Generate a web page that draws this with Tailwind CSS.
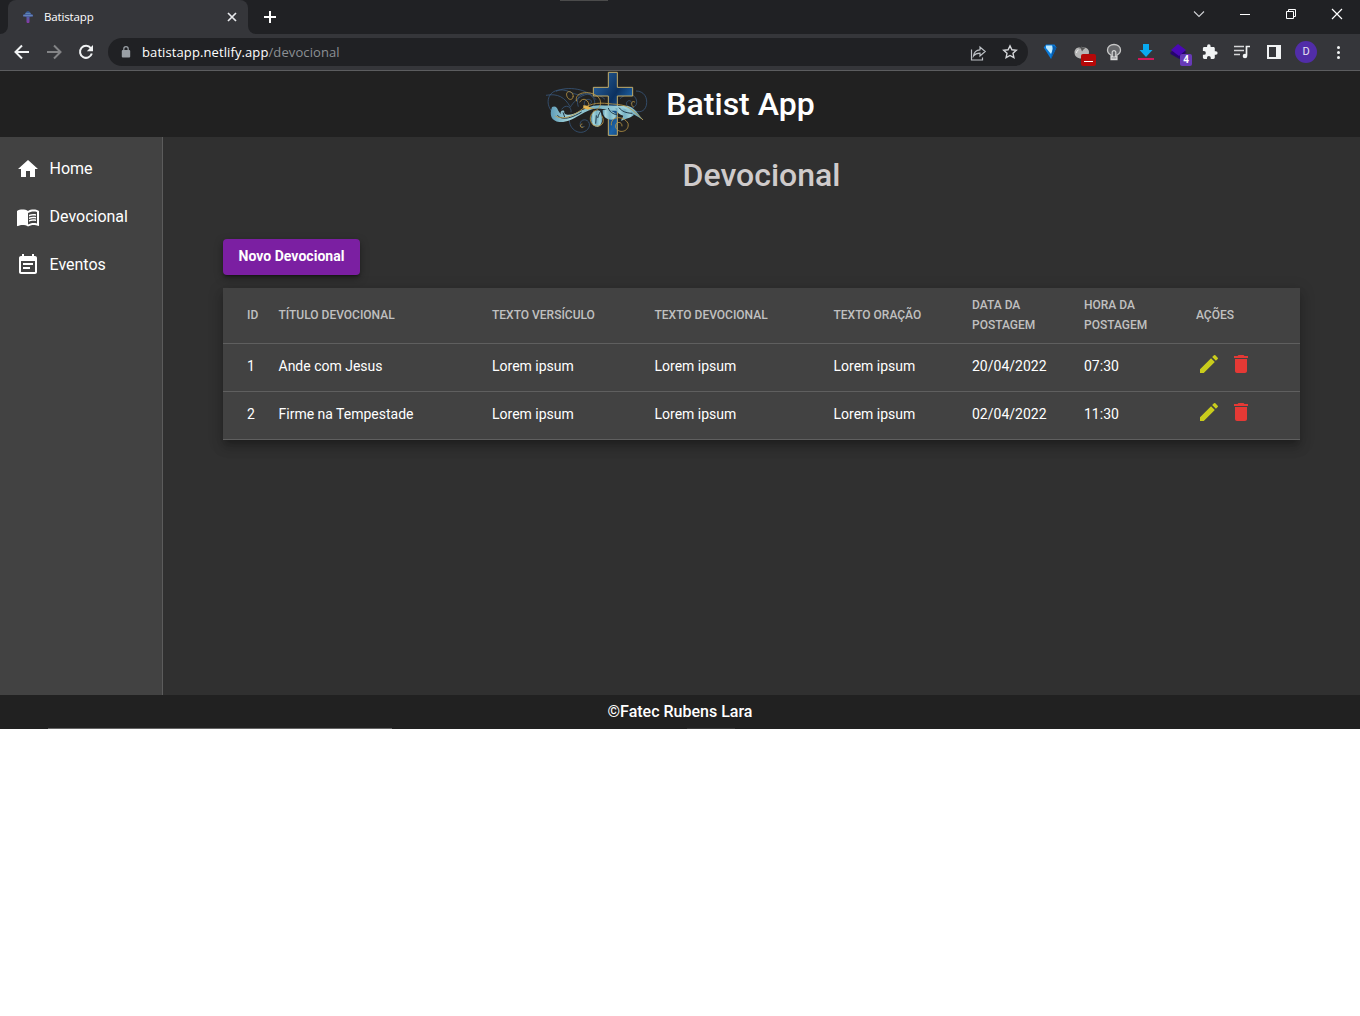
<!DOCTYPE html>
<html lang="pt-BR">
<head>
<meta charset="utf-8">
<title>Batistapp</title>
<script src="https://cdn.jsdelivr.net/npm/@tailwindcss/browser@4"></script>
</head>
<body class="bg-white font-['Roboto',sans-serif] text-white overflow-hidden">
<div class="flex flex-col h-[729px] w-[1360px] bg-[#303030]">

  <!-- Tab strip -->
  <div class="relative flex h-[34px] shrink-0 bg-[#202124] font-['Open_Sans',sans-serif]">
    <div class="absolute left-[560px] top-0 w-12 h-px bg-[#4b4b4b]"></div>
    <div class="w-2 flex items-end bg-[#35363a]"><div class="w-2 h-full bg-[#202124] rounded-br-lg"></div></div>
    <div class="w-60 flex items-center rounded-t-lg bg-[#35363a] pl-3 pr-[10px]">
      <svg class="w-4 h-4" viewBox="0 0 16 16"><defs><linearGradient id="fav" x1="0" y1="0" x2="0" y2="1"><stop offset="0" stop-color="#315a92"/><stop offset=".5" stop-color="#5260a5"/><stop offset="1" stop-color="#8a35a5"/></linearGradient></defs><path fill="url(#fav)" d="M6 3l2-1 2 1 1 2 2 .8v1.600l-3.500.6v5l-.5 1H7l-.5-1V8L3 7.400V5.800L5 5z"/><path d="M5.500 4.500h5M3.500 6.500h9" stroke="#739fc0" stroke-width=".6"/></svg>
      <span class="ml-2 text-[11.5px] leading-4 tracking-[-0.15px] grow">Batistapp</span>
      <svg class="w-3 h-3" viewBox="0 0 12 12"><path d="M2 2l8 8M10 2l-8 8" stroke="#e8eaed" stroke-width="1.7"/></svg>
    </div>
    <div class="w-2 bg-[#35363a]"><div class="w-2 h-full bg-[#202124] rounded-bl-lg"></div></div>
    <svg class="mt-[9px] ml-[6px] w-4 h-4" viewBox="0 0 16 16"><path d="M8 2v12M2 8h12" stroke="#fff" stroke-width="2"/></svg>
    <div class="ml-auto flex h-7 items-center">
      <svg class="w-[46px] h-7" viewBox="0 0 46 28"><path d="M18 11.500l5 5 5-5" fill="none" stroke="#d0d2d5" stroke-width="1.100"/></svg>
      <svg class="w-[46px] h-7" viewBox="0 0 46 28"><path d="M18 14.500h10" stroke="#fff"/></svg>
      <svg class="w-[46px] h-7" viewBox="0 0 46 28"><path d="M18.500 11.500h7v7h-7zM20.500 11.500v-2h7v7h-2" fill="none" stroke="#fff"/></svg>
      <svg class="w-[46px] h-7" viewBox="0 0 46 28"><path d="M18 9l10 10M28 9l-10 10" stroke="#fff" stroke-width="1.200"/></svg>
    </div>
  </div>

  <!-- Toolbar -->
  <div class="flex h-[37px] shrink-0 items-center border-b border-[#5c5d5f] bg-[#35363a] pl-[6px] pr-[6px]">
    <svg class="w-8 h-8" viewBox="0 0 32 32"><path d="M23 16H10M16 9.500L9.500 16l6.500 6.500" fill="none" stroke="#f1f3f4" stroke-width="2"/></svg>
    <svg class="w-8 h-8" viewBox="0 0 32 32"><path d="M9 16h13M16 9.500l6.500 6.500-6.500 6.500" fill="none" stroke="#838486" stroke-width="2"/></svg>
    <svg class="w-8 h-8" viewBox="0 0 32 32"><path d="M20.800 12.200A6 6 0 1 0 21.800 17.500" fill="none" stroke="#f1f3f4" stroke-width="2"/><path d="M23 9v6.200h-6.200z" fill="#f1f3f4"/></svg>
    <div class="ml-[6px] mr-[6px] flex h-7 w-[920px] items-center rounded-full bg-[#202124] pl-[13px] pr-[6px]">
      <svg class="w-[10px] h-3" viewBox="0 0 10 12"><rect x=".8" y="4" width="8.400" height="7.500" rx="1" fill="#9aa0a6"/><path d="M2.800 4.500V2.900a2.200 2.200 0 0 1 4.400 0v1.600" fill="none" stroke="#9aa0a6" stroke-width="1.200"/></svg>
      <span class="ml-[11px] grow whitespace-nowrap font-['Open_Sans',sans-serif] text-[13px] leading-5 tracking-[0.1px] text-white">batistapp.netlify.app<span class="text-[#8c9095]">/devocional</span></span>
      <svg class="w-6 h-6 mr-2" viewBox="0 0 24 24"><path d="M5.500 9.500v10.500h11v-2.500M7.500 16c.5-4 3.500-6 6.500-6.200V7l5.200 4.500-5.200 4.500v-2.800c-2.500 0-5 .8-6.500 2.800z" fill="none" stroke="#bdc1c6" stroke-width="1.200"/></svg>
      <svg class="w-6 h-6" viewBox="0 0 24 24"><path d="M12 5.800l1.900 4 4.400.5-3.300 3 .9 4.400-3.900-2.200-3.900 2.200.9-4.400-3.300-3 4.400-.5z" fill="none" stroke="#d5d7da" stroke-width="1.400"/></svg>
    </div>
    <svg class="w-8 h-8" viewBox="0 0 32 32"><path d="M9.700 11.500l2.300-3h8.500l2 3L17 23z" fill="#087bdc"/><path d="M12 9.500h6l1 3.500-2 5-5-6z" fill="#bce9ff"/><path d="M19 9.500l3.500 2L17 23l1.500-9z" fill="#075aa8"/></svg>
    <div class="relative w-8 h-8">
      <svg class="w-8 h-8" viewBox="0 0 32 32"><path d="M15 12c4-1.500 8 .5 8 4 0 4-3 6.500-7.500 6.500S8.500 20 8.500 16.500s3-6 6.500-4.500z" fill="#b6b6b6"/><path d="M11 11.500l4 1 .5-3 1 2.500 4-1-3 2.500-1.500 2-1-2.500z" fill="#555"/><path d="M10.500 17a3 3 0 0 1 2-3" fill="none" stroke="#eee"/></svg>
      <div class="absolute left-[15px] top-[18px] flex h-3 w-[15px] items-center justify-center rounded-[2px] bg-[#b50808]"><div class="mt-[3px] h-px w-[9px] bg-white"></div></div>
    </div>
    <svg class="w-8 h-8" viewBox="0 0 32 32"><path d="M13 19c-2-1-3.500-2.500-3.500-5a6.500 5.500 0 0 1 13 0c0 2.500-1.500 4-3.500 5V23.500h-6z" fill="#66676a" stroke="#c7c7c7" stroke-width="1.300"/><path d="M14.200 21v-5a1.900 1.900 0 0 1 3.600 0V21" fill="none" stroke="#d5d5d5" stroke-width="1.200"/><path d="M13 21h6M13 23h6" stroke="#eee"/></svg>
    <svg class="w-8 h-8" viewBox="0 0 32 32"><path d="M13 8h6v6h3.500L16 21l-6.500-7H13z" fill="#08a9ef"/><path d="M8 22h16v2H8z" fill="#d2185a"/></svg>
    <div class="relative w-8 h-8">
      <svg class="w-8 h-8" viewBox="0 0 32 32"><path d="M8.500 16l8-4 8 4-7 7-9-5z" fill="#26056d"/><path d="M9 14l7-6 8 6-7 6z" fill="#4a08b5"/></svg>
      <div class="absolute left-[18px] top-[18px] flex h-3 w-3 items-center justify-center rounded-[2px] bg-[#673ab7] text-[10px] font-bold leading-3">4</div>
    </div>
    <svg class="w-8 h-8" viewBox="0 0 32 32"><path transform="translate(7.500 7.500) scale(.7)" d="M20.500 11H19V7c0-1.100-.9-2-2-2h-4V3.500a2.500 2.500 0 0 0-5 0V5H4c-1.100 0-2 .9-2 2v3.800h1.500a2.700 2.700 0 0 1 0 5.400H2V20c0 1.100.9 2 2 2h3.800v-1.500a2.700 2.700 0 0 1 5.400 0V22H17c1.100 0 2-.9 2-2v-4h1.500a2.500 2.500 0 0 0 0-5z" fill="#f1f3f4"/></svg>
    <svg class="w-8 h-8" viewBox="0 0 32 32"><path d="M8 10.500h10M8 14.500h10M8 18.500h6" stroke="#d5d6d8" stroke-width="1.600"/><path d="M20.500 19.500V10.500H24" fill="none" stroke="#f1f3f4" stroke-width="1.700"/><circle cx="19" cy="20" r="2.300" fill="#f1f3f4"/></svg>
    <svg class="w-8 h-8" viewBox="0 0 32 32"><path d="M10 10h12v12H10z" fill="none" stroke="#f1f3f4" stroke-width="2"/><path d="M18 10h4v12h-4z" fill="#f1f3f4"/></svg>
    <div class="flex h-8 w-8 items-center justify-center"><div class="flex h-[22px] w-[22px] items-center justify-center rounded-full bg-[#512da8] pt-px text-[11px] text-[#e8e4f3]">D</div></div>
    <svg class="w-8 h-8" viewBox="0 0 32 32" fill="#f1f3f4"><circle cx="16.500" cy="11.500" r="1.500"/><circle cx="16.500" cy="16.500" r="1.500"/><circle cx="16.500" cy="21.500" r="1.500"/></svg>
  </div>

  <!-- App header -->
  <header class="flex h-[66px] shrink-0 items-center justify-center bg-[#212121]">
    <svg class="h-[66px] w-[104px]" viewBox="45 15 312 198" fill="none">
      <defs>
        <linearGradient id="cross" x1="0" y1="0" x2="1" y2="1"><stop offset="0" stop-color="#2d69a5"/><stop offset=".45" stop-color="#0c315f"/><stop offset=".7" stop-color="#1c62a6"/><stop offset="1" stop-color="#0c294f"/></linearGradient>
        <linearGradient id="leaf" x1="0" y1="0" x2="1" y2="0"><stop offset="0" stop-color="#5f9db8"/><stop offset=".2" stop-color="#a5d5db"/><stop offset=".5" stop-color="#78b3c5"/><stop offset=".8" stop-color="#a0d2da"/><stop offset="1" stop-color="#5b9bb5"/></linearGradient>
      </defs>
      <g stroke="#3a5c84" stroke-width="2.200">
        <path d="M48 88c35-7 58 7 72 34M66 137c-22-26-12-62 22-65 30-3 43 19 73 14M78 76c35-17 95-8 120 25M145 122c-12-35 20-50 41-31 17 18 5 38-12 34-16-4-14-24 0-25 12-1 14 12 4 14M118 158c-2 35 35 53 55 32 14-17-2-34-16-27-13 8-4 25 7 18M270 98c25-23 51-11 50 12-2 22-34 18-30 0 4-11 19-5 13 4M318 75c24 0 36 20 31 43-5 20-22 23-39 15M95 130c12-18 31-7 28 9M120 125c20-35 66-60 105-25"/>
      </g>
      <path d="M235 19h27v45h46v26h-46v118h-27V90h-45V64h45z" fill="url(#cross)" stroke="#c3ad69" stroke-width="3"/>
      <g fill="url(#leaf)">
        <path d="M66 123c9-5 17 2 18 10l8 12c-2-9 4-14 11-10-3 10 10 15 28 8 30-10 48-25 78-25 30 1 50 2 74 1 25-1 34 15 57 43-22-13-34-23-55-25-30-3-42 0-62-7-30-8-49 3-73 17-25 15-44 23-62 21-24-3-31-21-22-45z"/>
        <path d="M187 140c15-12 26-7 27 5 5 15 4 31-11 38-17-2-25-18-16-43z"/>
        <path d="M218 132c22-2 35 5 43 15-3 13-15 16-25 13-12-3-19-14-18-28z"/>
        <path d="M256 127c24-4 44 5 56 20-12 10-25 10-38 18-1-8 5-10 6-16-11-2-20-9-24-22z"/>
      </g>
      <path d="M82 148c17 19 50 4 73-10M214 131c-4 9-9 15-11 25M235 126c4 12 12 17 27 21M267 125c9 11 20 16 40 17M99 139l5 14M199 148l-2 25" stroke="#1e3545" stroke-width="3"/>
      <g stroke="#bd9845" stroke-width="2.500">
        <path d="M76 150c31 17 66-10 85-24 37-22 65-13 99-11 35 3 45 14 79 47"/>
        <path d="M130 92c-1-19-23-20-20-4 4 17 20 15 19 2M140 106c-9-28 38-34 61-16 21 17 8 43-12 46M149 109c9-19 31-5 27 12h-12l7 6h22M190 139c-18 13-8 47 17 41 16-5 15-20 8-31M244 178c-3-28 36-31 50-6 6 25-30 34-37 11-2-18 20-18 19-2M315 109c-12-10-13 13-4 14M157 174c-11 2-5 14 3 9"/>
      </g>
      <path d="M160 118l10 1 15 7-10 5-15-4z" fill="#e3b653"/>
    </svg>
    <h1 class="ml-[17px] text-[32px] font-medium leading-10">Batist App</h1>
  </header>

  <div class="flex min-h-0 grow">
    <!-- Side navigation -->
    <nav class="flex w-[163px] shrink-0 flex-col border-r border-[#5c5c5c] bg-[#424242] pt-2 text-base">
      <a class="flex h-12 items-center pl-4"><svg class="h-6 w-6" viewBox="0 0 24 24" fill="#fff"><path d="M10 20v-6h4v6h5v-8h3L12 3 2 12h3v8z"/></svg><span class="pl-[9.500px]">Home</span></a>
      <a class="flex h-12 items-center pl-4"><svg class="h-6 w-6" viewBox="0 0 24 24" fill="#fff"><path d="M21 5c-1.110-.35-2.330-.5-3.500-.5-1.950 0-4.050.4-5.500 1.500-1.450-1.100-3.550-1.500-5.500-1.500S2.450 4.900 1 6v14.650c0 .25.25.5.5.5.1 0 .15-.05.25-.05C3.100 20.450 5.050 20 6.500 20c1.950 0 4.050.4 5.500 1.500 1.350-.85 3.800-1.500 5.500-1.500 1.650 0 3.350.3 4.750 1.050.1.050.15.050.25.050.25 0 .5-.25.5-.5V6c-.6-.45-1.250-.75-2-1zm0 13.500c-1.100-.35-2.300-.5-3.500-.5-1.700 0-4.150.65-5.500 1.500V8c1.350-.85 3.800-1.500 5.500-1.500 1.200 0 2.400.15 3.500.5v11.500z"/><path d="M17.500 10.500c.88 0 1.730.09 2.500.26V9.240c-.79-.15-1.640-.24-2.500-.24-1.700 0-3.240.29-4.500.83v1.660c1.130-.64 2.700-.99 4.500-.99zM13 12.490v1.660c1.130-.64 2.700-.99 4.500-.99.88 0 1.730.09 2.500.26V11.900c-.79-.15-1.640-.24-2.500-.24-1.700 0-3.240.3-4.500.83zM17.500 14.330c-1.700 0-3.240.29-4.500.83v1.660c1.130-.64 2.700-.99 4.500-.99.88 0 1.730.09 2.500.26v-1.520c-.79-.16-1.640-.24-2.500-.24z"/></svg><span class="pl-[9.500px]">Devocional</span></a>
      <a class="flex h-12 items-center pl-4"><svg class="h-6 w-6" viewBox="0 0 24 24" fill="#fff"><path d="M17 10H7v2h10v-2zm2-7h-1V1h-2v2H8V1H6v2H5c-1.110 0-1.990.9-1.990 2L3 19c0 1.100.89 2 2 2h14c1.100 0 2-.9 2-2V5c0-1.100-.9-2-2-2zm0 16H5V8h14v11zm-5-5H7v2h7v-2z"/></svg><span class="pl-[9.500px]">Eventos</span></a>
    </nav>

    <main class="flex grow flex-col items-start bg-[#303030] px-[60px] pt-[18px]">
      <h2 class="w-full text-center text-[32px] font-medium leading-10 text-[#cfcbcb]">Devocional</h2>
      <button class="mt-11 h-9 w-[137px] rounded bg-[#7b1fa2] pb-[2px] text-sm font-bold shadow-[0_3px_1px_-2px_rgba(0,0,0,.2),0_2px_2px_0_rgba(0,0,0,.14),0_3px_8px_0_rgba(0,0,0,.35)]"><span class="tracking-[0.03px]">Novo Devocional</span></button>
      <div class="mt-[13px] w-[1077px] bg-[#424242] text-sm shadow-[0_5px_5px_-3px_rgba(0,0,0,.2),0_8px_10px_1px_rgba(0,0,0,.14),0_3px_14px_2px_rgba(0,0,0,.12)]">
        <div class="grid h-14 grid-cols-[31.500px_213.500px_162.500px_179px_138.500px_112px_112px_1fr] items-center border-b border-[#5f5f5f] pl-6 pb-px text-xs font-medium leading-5 text-[#c0c0c0]">
          <div>ID</div><div>TÍTULO DEVOCIONAL</div><div>TEXTO VERSÍCULO</div><div>TEXTO DEVOCIONAL</div><div>TEXTO ORAÇÃO</div><div>DATA DA<br>POSTAGEM</div><div>HORA DA<br>POSTAGEM</div><div>AÇÕES</div>
        </div>
        <div class="grid h-12 grid-cols-[31.500px_213.500px_162.500px_179px_138.500px_112px_112px_1fr] items-center border-b border-[#5f5f5f] pl-6 pb-1">
          <div>1</div><div>Ande com Jesus</div><div>Lorem ipsum</div><div>Lorem ipsum</div><div>Lorem ipsum</div><div>20/04/2022</div><div>07:30</div>
          <div class="flex gap-2 pl-[0.500px] pb-[3px]"><svg class="h-6 w-6" viewBox="0 0 24 24" fill="#c9cc1c"><path d="M3 17.250V21h3.750L17.810 9.940l-3.750-3.750L3 17.250zM20.710 7.040a1 1 0 0 0 0-1.410l-2.340-2.340a1 1 0 0 0-1.410 0l-1.830 1.830 3.750 3.750 1.830-1.830z"/></svg><svg class="h-6 w-6" viewBox="0 0 24 24" fill="#e53935"><path d="M6 19c0 1.100.9 2 2 2h8c1.100 0 2-.9 2-2V7H6v12zM19 4h-3.500l-1-1h-5l-1 1H5v2h14V4z"/></svg></div>
        </div>
        <div class="grid h-12 grid-cols-[31.500px_213.500px_162.500px_179px_138.500px_112px_112px_1fr] items-center border-b border-[#5f5f5f] pl-6 pb-1">
          <div>2</div><div>Firme na Tempestade</div><div>Lorem ipsum</div><div>Lorem ipsum</div><div>Lorem ipsum</div><div>02/04/2022</div><div>11:30</div>
          <div class="flex gap-2 pl-[0.500px] pb-[3px]"><svg class="h-6 w-6" viewBox="0 0 24 24" fill="#c9cc1c"><path d="M3 17.250V21h3.750L17.810 9.940l-3.750-3.750L3 17.250zM20.710 7.040a1 1 0 0 0 0-1.410l-2.340-2.340a1 1 0 0 0-1.410 0l-1.830 1.830 3.750 3.750 1.830-1.830z"/></svg><svg class="h-6 w-6" viewBox="0 0 24 24" fill="#e53935"><path d="M6 19c0 1.100.9 2 2 2h8c1.100 0 2-.9 2-2V7H6v12zM19 4h-3.500l-1-1h-5l-1 1H5v2h14V4z"/></svg></div>
        </div>
      </div>
    </main>
  </div>

  <footer class="relative flex h-[34px] shrink-0 items-center justify-center bg-[#212121] pb-px text-base font-medium">
    ©Fatec Rubens Lara
    <div class="absolute bottom-0 left-12 h-px w-[344px] bg-[#666]"></div>
    <div class="absolute bottom-0 left-[687px] h-px w-12 bg-[#3a3a3a]"></div>
  </footer>
</div>
</body>
</html>
